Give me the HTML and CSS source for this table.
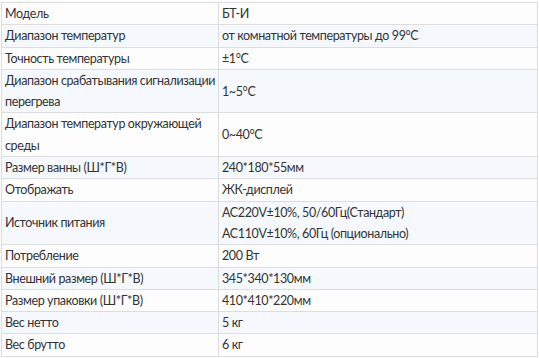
FILE: index.html
```html
<!DOCTYPE html>
<html lang="ru">
<head>
<meta charset="utf-8">
<title>Характеристики</title>
<link rel="stylesheet" href="styles.css">
</head>
<body>
<table class="spec">
  <colgroup><col class="c-name"><col class="c-val"></colgroup>
  <tbody>
    <tr><td>Модель</td><td>БТ-И</td></tr>
    <tr><td>Диапазон температур</td><td>от комнатной температуры до 99°C</td></tr>
    <tr><td>Точность температуры</td><td>±1°C</td></tr>
    <tr><td>Диапазон срабатывания сигнализации перегрева</td><td>1~5°C</td></tr>
    <tr><td>Диапазон температур окружающей среды</td><td>0~40°C</td></tr>
    <tr><td>Размер ванны (Ш*Г*В)</td><td>240*180*55мм</td></tr>
    <tr><td>Отображать</td><td>ЖК-дисплей</td></tr>
    <tr><td>Источник питания</td><td>AC220V±10%, 50/60Гц(Стандарт)<br>AC110V±10%, 60Гц (опционально)</td></tr>
    <tr><td>Потребление</td><td>200 Вт</td></tr>
    <tr><td>Внешний размер (Ш*Г*В)</td><td>345*340*130мм</td></tr>
    <tr><td>Размер упаковки (Ш*Г*В)</td><td>410*410*220мм</td></tr>
    <tr><td>Вес нетто</td><td>5 кг</td></tr>
    <tr><td>Вес брутто</td><td>6 кг</td></tr>
  </tbody>
</table>
</body>
</html>
```
FILE: styles.css
```css
html, body {
  margin: 0;
  background: #ffffff;
}
body {
  padding: 2px 1px 0 1px;
  font-family: Lato, "Noto Sans", sans-serif;
  font-size: 12.5px;
  letter-spacing: -0.38px;
  color: #333333;
}
.spec {
  width: 100%;
  border-collapse: collapse;
  table-layout: fixed;
}
.c-name { width: 217px; }
.spec td {
  border: 1px solid #dddddd;
  padding: 0 2px 0 3px;
  line-height: 21.3px;
  vertical-align: middle;
  background: #fdfdfd;
}
.spec tr:nth-child(even) td {
  background: #f5f9fe;
}
```
